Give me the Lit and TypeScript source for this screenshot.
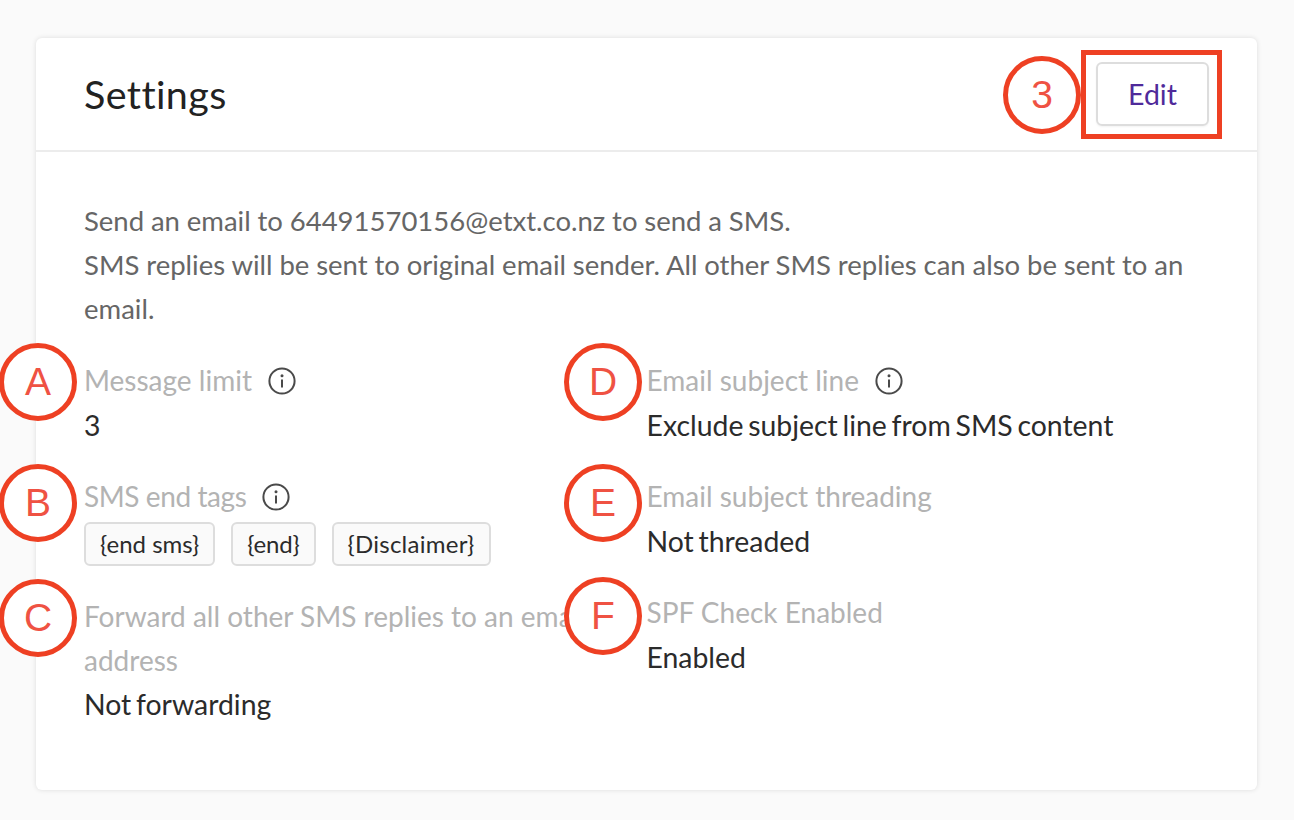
import { LitElement, html, css } from "lit";
import { customElement } from "lit/decorators.js";

const info = html`<svg class="info" viewBox="0 0 28 28" width="28" height="28"><circle cx="14" cy="14" r="12.6" fill="none" stroke="#4a4a4a" stroke-width="2"/><circle cx="14" cy="8.8" r="1.5" fill="#4a4a4a"/><path d="M14 12.5v8" stroke="#4a4a4a" stroke-width="2"/></svg>`;

const marks = [
  { t: "A", x: 38, y: 382 },
  { t: "B", x: 38, y: 503 },
  { t: "C", x: 38, y: 618 },
  { t: "D", x: 603, y: 382 },
  { t: "E", x: 603, y: 503 },
  { t: "F", x: 603, y: 616 },
  { t: "3", x: 1042, y: 95 },
];

@customElement("app-root")
export class AppRoot extends LitElement {
  static styles = css`
    :host { display: block; width: 1294px; height: 820px; background: #fafafa; font-family: Lato, "Open Sans", sans-serif; overflow: hidden; padding: 38px 36px 0; box-sizing: border-box; position: relative; font-variant-ligatures: none; }
    .card { width: 1221px; height: 752px; background: #fff; border-radius: 6px; box-shadow: 0 0 5px rgba(0,0,0,.12); }
    .head { height: 114px; box-sizing: border-box; border-bottom: 2px solid #ececec; display: flex; align-items: center; justify-content: space-between; padding: 0 48px; }
    h1 { margin: 0 0 2px; font-size: 39.5px; font-weight: 400; color: #222; letter-spacing: .4px; }
    .edit { width: 113px; height: 64px; box-sizing: border-box; border: 2px solid #ddd; border-radius: 6px; display: flex; align-items: center; justify-content: center; color: #4f2a9a; font-size: 28.5px; box-shadow: 0 1px 2px rgba(0,0,0,.05); }
    .body { padding: 47px 48px 0; }
    .intro { font-size: 27.5px; word-spacing: -.2px; line-height: 44px; color: #666; margin-bottom: 28px; }
    .grid { display: grid; grid-template-columns: 562.5px 1fr; }
    .col { display: flex; flex-direction: column; gap: 28px; }
    .col.left { padding-right: 30px; }
    .label { font-size: 28px; line-height: 42px; padding-bottom: 2px; color: #b3b3b3; }
    .label.wrap { line-height: 44px; padding-bottom: 0; }
    .label.icon { display: flex; align-items: center; gap: 16px; }
    .label.tight { letter-spacing: -.42px; }
    .info { margin-top: 2px; }
    .value { font-size: 28.4px; word-spacing: -2.5px; line-height: 44px; color: #2b2b2b; }
    .tags { display: flex; gap: 16px; margin-top: 3px; }
    .tag { height: 44px; box-sizing: border-box; border: 2px solid #ddd; border-radius: 6px; background: #fafafa; padding: 0 14px 2px; display: flex; align-items: center; font-size: 24px; color: #2b2b2b; }
    .tag.narrow { letter-spacing: -.2px; }
    .tag.wide { letter-spacing: .25px; }
    .mark { position: absolute; width: 78px; height: 78px; box-sizing: border-box; border: 5px solid #ee4023; border-radius: 50%; display: flex; align-items: center; justify-content: center; font-family: "Liberation Sans", Arial, sans-serif; font-size: 39px; color: #ef5243; transform: translate(-50%, -50%); background: #fff; }
    .box { position: absolute; left: 1081px; top: 50px; width: 141px; height: 89px; box-sizing: border-box; border: 5px solid #ee4023; }
  `;
  render() {
    return html`<div class="card">
      <div class="head"><h1>Settings</h1><div class="edit">Edit</div></div>
      <div class="body">
        <div class="intro">Send an email to 64491570156@etxt.co.nz to send a SMS.<br>SMS replies will be sent to original email sender. All other SMS replies can also be sent to an email.</div>
        <div class="grid">
          <div class="col left">
            <div><div class="label icon">Message limit ${info}</div><div class="value">3</div></div>
            <div><div class="label icon tight">SMS end tags ${info}</div>
              <div class="tags"><span class="tag">{end sms}</span><span class="tag narrow">{end}</span><span class="tag wide">{Disclaimer}</span></div></div>
            <div><div class="label wrap">Forward all other SMS replies to an email address</div><div class="value">Not forwarding</div></div>
          </div>
          <div class="col">
            <div><div class="label icon">Email subject line ${info}</div><div class="value">Exclude subject line from SMS content</div></div>
            <div><div class="label">Email subject threading</div><div class="value">Not threaded</div></div>
            <div><div class="label">SPF Check Enabled</div><div class="value">Enabled</div></div>
          </div>
        </div>
      </div>
    </div>
    <div class="box"></div>
    ${marks.map((m) => html`<div class="mark" style="left:${m.x}px;top:${m.y}px">${m.t}</div>`)}`;
  }
}
